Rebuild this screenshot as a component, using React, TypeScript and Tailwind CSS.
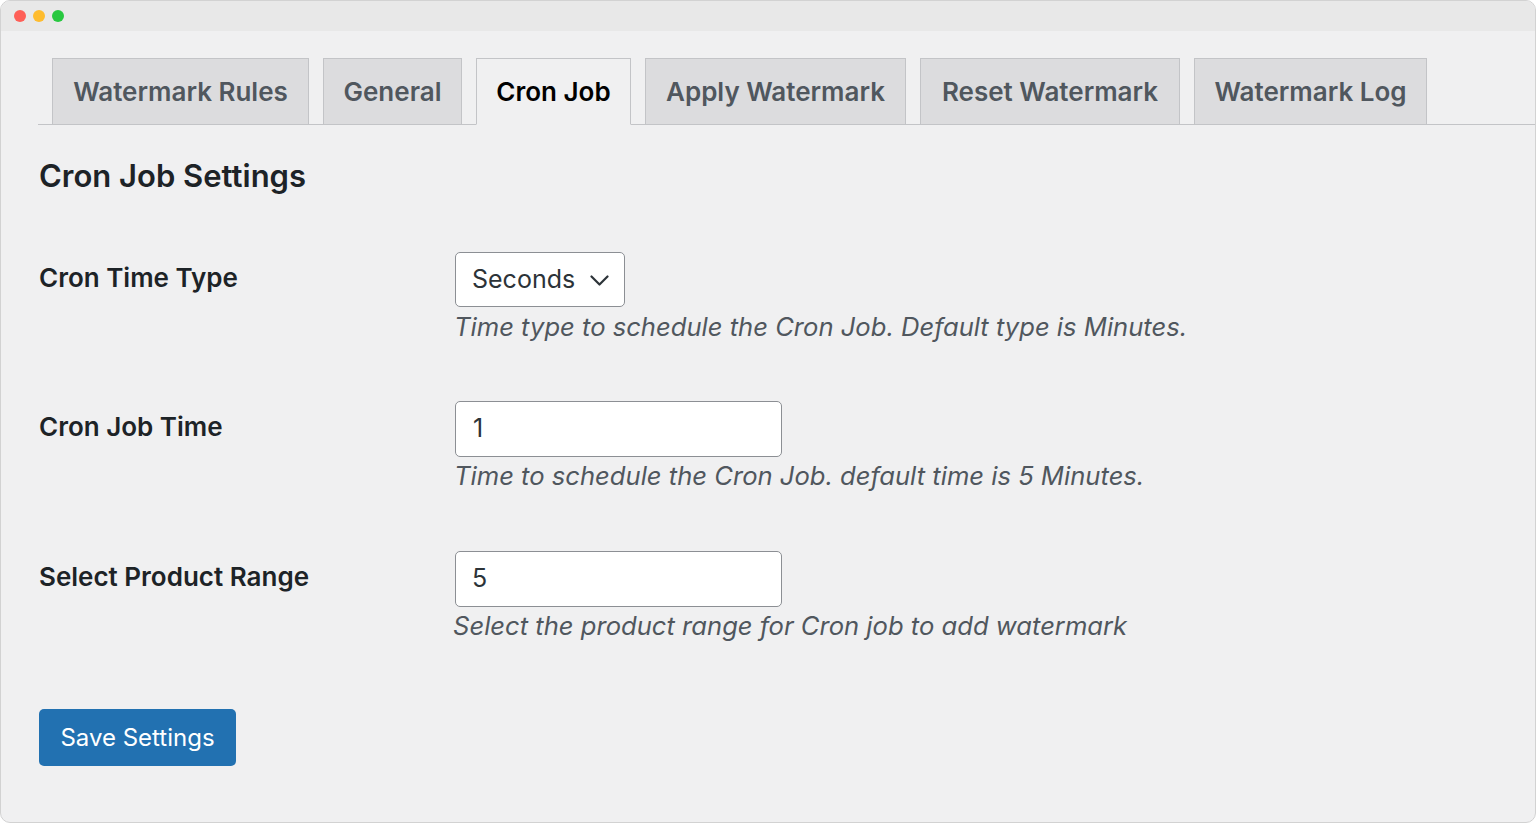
const TABS = [
  { label: "Watermark Rules", w: "w-[257px]" },
  { label: "General", w: "w-[139px]" },
  { label: "Cron Job", w: "w-[155px]", active: true },
  { label: "Apply Watermark", w: "w-[261px]" },
  { label: "Reset Watermark", w: "w-[260px]" },
  { label: "Watermark Log", w: "w-[233px]" },
];

export default function App() {
  return (
    <div className="w-[1536px] h-[823px] overflow-hidden bg-white font-['Inter',sans-serif]">
      <div className="h-full flex flex-col border border-[#d2d2d2] rounded-[10px] overflow-hidden bg-[#f0f0f1]">
        {/* Title bar */}
        <div className="h-[30px] shrink-0 bg-[#e8e8e8] flex items-center gap-[7px] pl-[13px]">
          <span className="w-[12px] h-[12px] rounded-full bg-[#fe5f57]" />
          <span className="w-[12px] h-[12px] rounded-full bg-[#febc2e]" />
          <span className="w-[12px] h-[12px] rounded-full bg-[#28c840]" />
        </div>

        <div className="flex-1 pl-[37px]">
          {/* Tabs */}
          <div className="mt-[27px] flex items-end border-b border-[#c3c4c7] h-[67px]">
            {TABS.map((t) => (
              <div
                key={t.label}
                className={`${t.w} ml-[14px] h-[67px] -mb-px flex items-center justify-center border text-[26px] font-semibold ${
                  t.active
                    ? "bg-[#f0f0f1] border-[#c3c4c7] border-b-[#f0f0f1] text-black"
                    : "bg-[#dcdcde] border-[#c3c4c7] text-[#50575e]"
                }`}
              >
                {t.label}
              </div>
            ))}
          </div>

          <h1 className="mt-[31px] text-[31px] leading-[40px] font-semibold text-[#1d2327] pl-[1px]">Cron Job Settings</h1>

          {/* Form */}
          <div className="mt-[56px] pl-[1px]">
            <div className="flex h-[149px]">
              <div className="w-[416px] text-[26px] leading-[51px] font-semibold text-[#1d2327]">Cron Time Type</div>
              <div>
                <div className="w-[170px] h-[55px] bg-white border-[1.5px] border-[#8c8f94] rounded-[5px] flex items-center justify-between pl-[16px] pr-[15px] text-[25px] text-[#2c3338]">
                  <span>Seconds</span>
                  <svg width="19" height="11" viewBox="0 0 19 11" fill="none" className="mt-[1px]">
                    <path d="M1.5 1.5 L9.5 9.5 L17.5 1.5" stroke="#2c3338" strokeWidth="2.2" strokeLinecap="round" strokeLinejoin="round" />
                  </svg>
                </div>
                <p className="text-[25.6px] leading-[40px] italic text-[#50575e] -ml-[1px]">
                  Time type to schedule the Cron Job. Default type is Minutes.
                </p>
              </div>
            </div>

            <div className="flex h-[150px]">
              <div className="w-[416px] text-[26px] leading-[51px] font-semibold text-[#1d2327]">Cron Job Time</div>
              <div>
                <div className="w-[327px] h-[56px] bg-white border-[1.5px] border-[#8c8f94] rounded-[5px] flex items-center pl-[17px] text-[25px] text-[#2c3338]">
                  1
                </div>
                <p className="text-[25.6px] leading-[38px] italic text-[#50575e] -ml-[1px]">
                  Time to schedule the Cron Job. default time is 5 Minutes.
                </p>
              </div>
            </div>

            <div className="flex h-[158px]">
              <div className="w-[416px] text-[26px] leading-[51px] font-semibold text-[#1d2327]">Select Product Range</div>
              <div>
                <div className="w-[327px] h-[56px] bg-white border-[1.5px] border-[#8c8f94] rounded-[5px] flex items-center pl-[16px] text-[25px] text-[#2c3338]">
                  5
                </div>
                <p className="text-[25.6px] leading-[38px] italic text-[#50575e] -ml-[2px]">
                  Select the product range for Cron job to add watermark
                </p>
              </div>
            </div>

            <button className="w-[197px] h-[57px] bg-[#2271b1] rounded-[5px] text-white text-[24px] leading-none">
              Save Settings
            </button>
          </div>
        </div>
      </div>
    </div>
  );
}
